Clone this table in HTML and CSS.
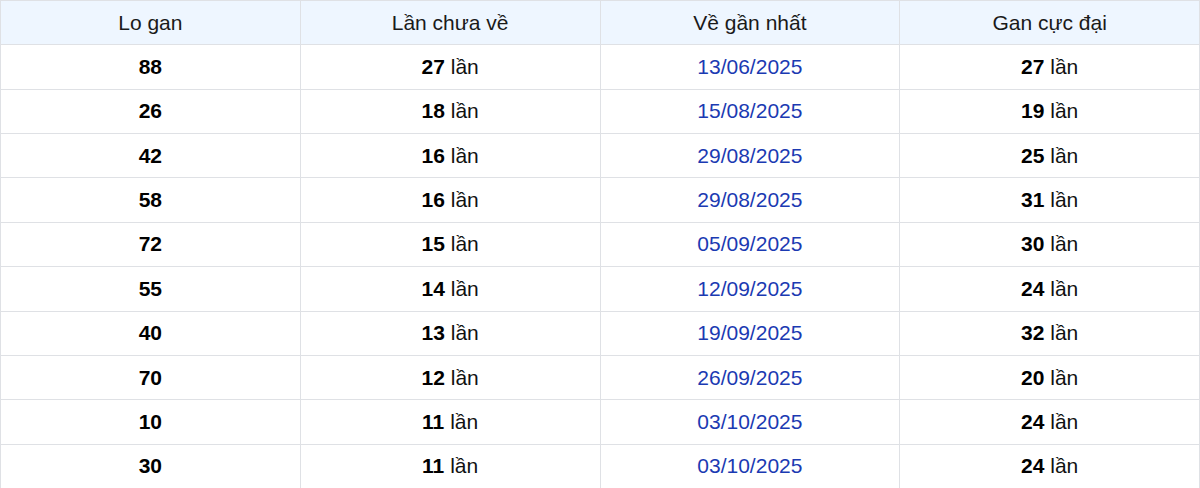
FILE: index.html
```html
<!DOCTYPE html>
<html lang="vi">
<head>
<meta charset="utf-8">
<title>Lo gan</title>
<link rel="stylesheet" href="styles.css">
</head>
<body>
<table class="gan-table">
  <thead>
    <tr><th>Lo gan</th><th>Lần chưa về</th><th>Về gần nhất</th><th>Gan cực đại</th></tr>
  </thead>
  <tbody>
    <tr><td><b>88</b></td><td><b>27</b> lần</td><td class="date">13/06/2025</td><td><b>27</b> lần</td></tr>
    <tr><td><b>26</b></td><td><b>18</b> lần</td><td class="date">15/08/2025</td><td><b>19</b> lần</td></tr>
    <tr><td><b>42</b></td><td><b>16</b> lần</td><td class="date">29/08/2025</td><td><b>25</b> lần</td></tr>
    <tr><td><b>58</b></td><td><b>16</b> lần</td><td class="date">29/08/2025</td><td><b>31</b> lần</td></tr>
    <tr><td><b>72</b></td><td><b>15</b> lần</td><td class="date">05/09/2025</td><td><b>30</b> lần</td></tr>
    <tr><td><b>55</b></td><td><b>14</b> lần</td><td class="date">12/09/2025</td><td><b>24</b> lần</td></tr>
    <tr><td><b>40</b></td><td><b>13</b> lần</td><td class="date">19/09/2025</td><td><b>32</b> lần</td></tr>
    <tr><td><b>70</b></td><td><b>12</b> lần</td><td class="date">26/09/2025</td><td><b>20</b> lần</td></tr>
    <tr><td><b>10</b></td><td><b>11</b> lần</td><td class="date">03/10/2025</td><td><b>24</b> lần</td></tr>
    <tr><td><b>30</b></td><td><b>11</b> lần</td><td class="date">03/10/2025</td><td><b>24</b> lần</td></tr>
  </tbody>
</table>
</body>
</html>
```
FILE: styles.css
```css
html, body {
  margin: 0;
  padding: 0;
  background: #ffffff;
}

.gan-table {
  width: 1200px;
  border-collapse: collapse;
  table-layout: fixed;
  font-family: "Liberation Sans", Arial, sans-serif;
  font-size: 21px;
  color: #111111;
}

.gan-table th,
.gan-table td {
  border: 1px solid #dfe1e5;
  text-align: center;
  vertical-align: middle;
  padding: 0;
  height: 43.36px;
}

.gan-table th {
  background: #eef6ff;
  font-weight: normal;
  color: #1a1a1a;
}

.gan-table b {
  font-weight: bold;
  color: #000000;
}

.gan-table .date {
  color: #1b3ab2;
}
```
